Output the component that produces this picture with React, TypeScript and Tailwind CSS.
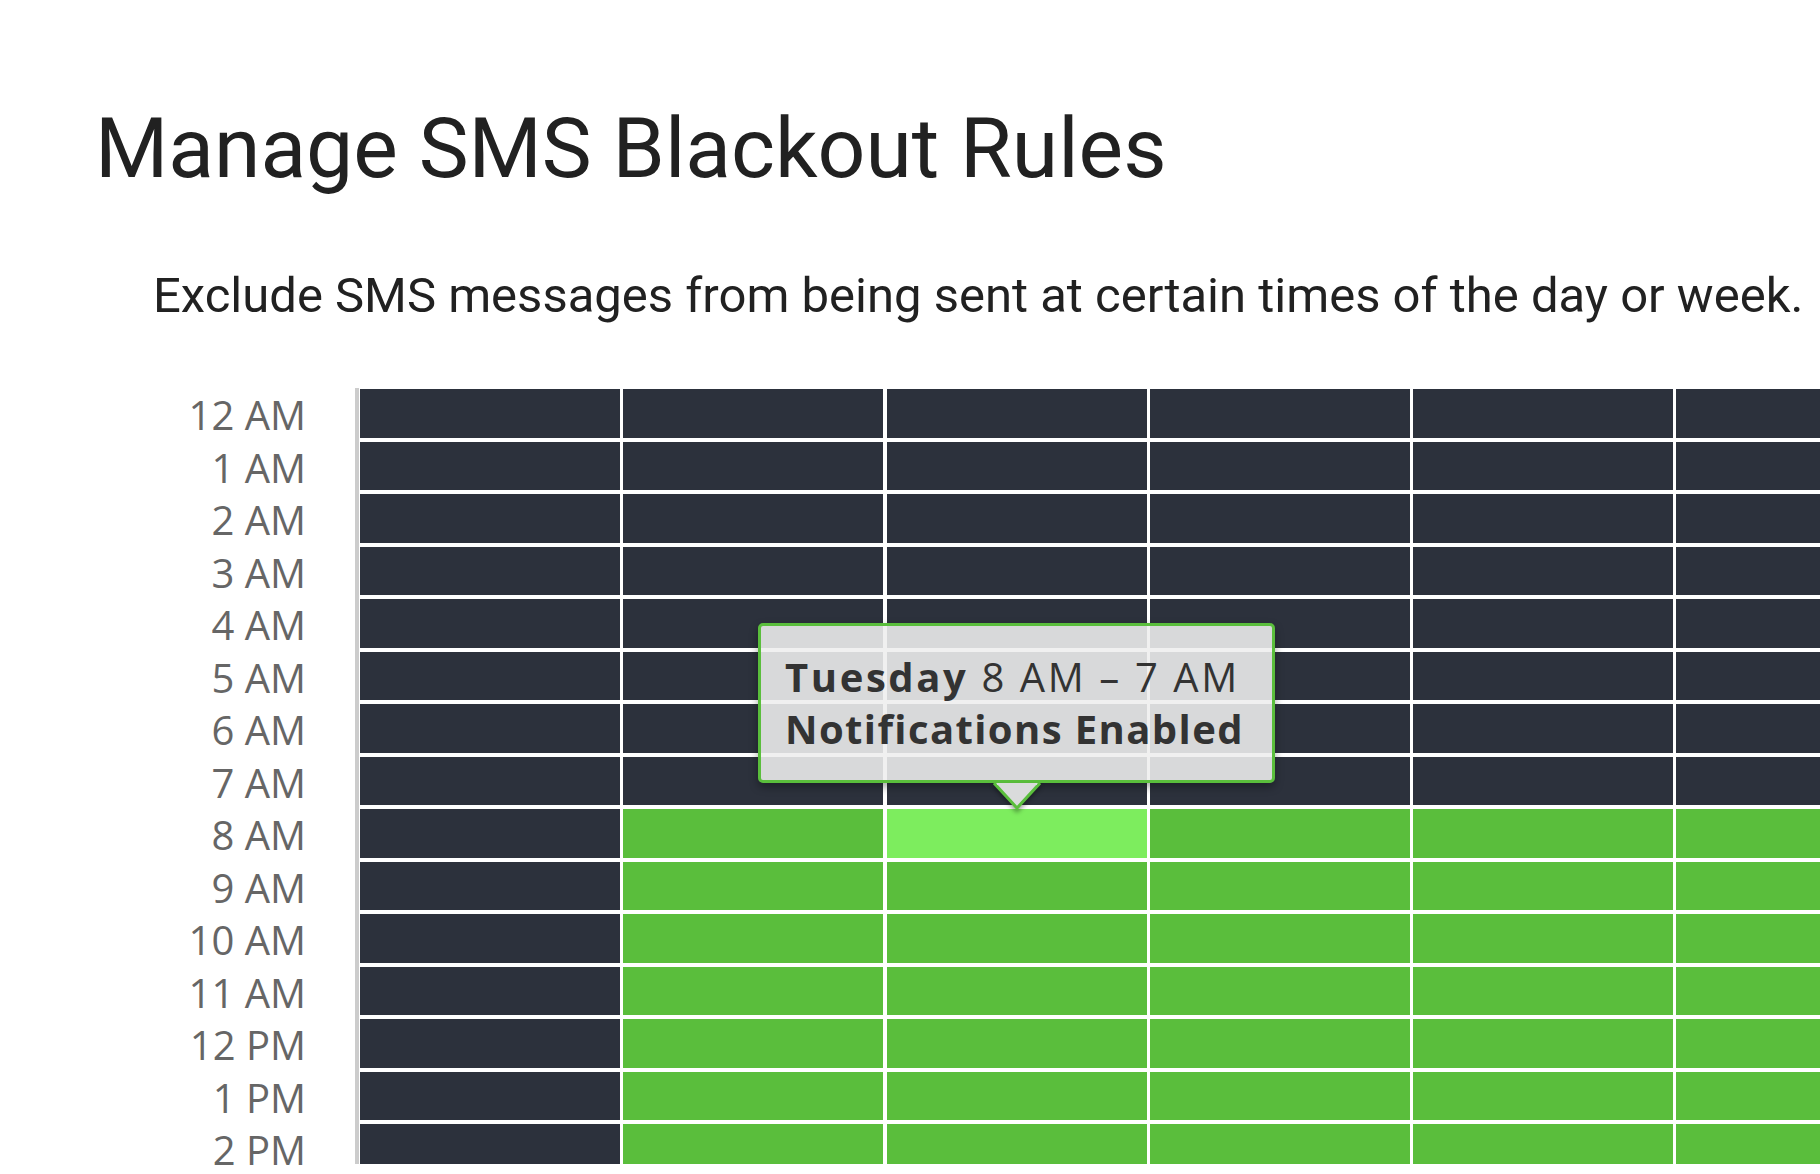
import React from 'react'

const hours = [
  '12 AM', '1 AM', '2 AM', '3 AM', '4 AM', '5 AM', '6 AM', '7 AM',
  '8 AM', '9 AM', '10 AM', '11 AM', '12 PM', '1 PM', '2 PM', '3 PM',
]

const days = ['Sunday', 'Monday', 'Tuesday', 'Wednesday', 'Thursday', 'Friday', 'Saturday']

// hovered slot
const hover = { day: 2, hour: 8 }

function cellColor(day: number, hour: number) {
  if (day === hover.day && hour === hover.hour) return 'bg-[#7ded5e]'
  if (day === 0 || hour < 8) return 'bg-[#2c313c]'
  return 'bg-[#5abe3c]'
}

function Tooltip() {
  return (
    <div className="absolute left-[758px] top-[623px] w-[517px] h-[160px] rounded-[5px] border-[3px] border-[#5abe3c] bg-[rgba(238,238,238,0.89)] shadow-[0_4px_8px_rgba(0,0,0,0.35)] pl-[24px] pt-[25px] text-[40px] leading-[52px] text-[#333] font-['Open_Sans',sans-serif] whitespace-nowrap">
      <div className="tracking-[2.6px]">
        <span className="font-bold">Tuesday</span> 8 AM – 7 AM
      </div>
      <div className="font-bold tracking-[1.4px]">Notifications Enabled</div>
      <svg
        className="absolute left-[232px] top-[157px] drop-shadow-[0_3px_2px_rgba(0,0,0,0.35)]"
        width="48"
        height="28"
        viewBox="0 0 48 28"
      >
        <path d="M1 0 L24 25 L47 0" fill="#dadbdc" stroke="#5abe3c" strokeWidth="3" />
        <rect x="4" y="0" width="40" height="2" fill="#dadbdc" />
      </svg>
    </div>
  )
}

export default function App() {
  return (
    <div className="relative w-full h-[1174px] overflow-hidden bg-white text-[#212121] font-['Roboto',sans-serif]">
      <h1 className="pl-[95px] pt-[107px] text-[84px] leading-none font-normal whitespace-nowrap">
        Manage SMS Blackout Rules
      </h1>
      <p className="pl-[153px] mt-[80px] text-[49px] leading-none whitespace-nowrap">
        Exclude SMS messages from being sent at certain times of the day or week.
      </p>

      <div className="mt-[68px] flex items-start">
        {/* hour labels */}
        <div className="w-[306px] flex-none flex flex-col gap-[4px] pt-[3px] text-right text-[40px] text-[#666] font-['Open_Sans',sans-serif]">
          {hours.slice(0, 15).map((h) => (
            <div key={h} className="h-[48.5px] leading-[48.5px] whitespace-nowrap">
              {h}
            </div>
          ))}
        </div>

        {/* schedule grid */}
        <div className="ml-[49px] h-[776px] overflow-hidden flex-none border-l-4 border-[#cccccc] pl-px pt-px flex flex-col gap-[4px]">
          {hours.map((h, hour) => (
            <div key={h} className="flex gap-[3.3px]">
              {days.map((d, day) => (
                <div key={d} className={`w-[260px] h-[48.5px] flex-none ${cellColor(day, hour)}`} />
              ))}
            </div>
          ))}
        </div>
      </div>

      <Tooltip />
    </div>
  )
}
